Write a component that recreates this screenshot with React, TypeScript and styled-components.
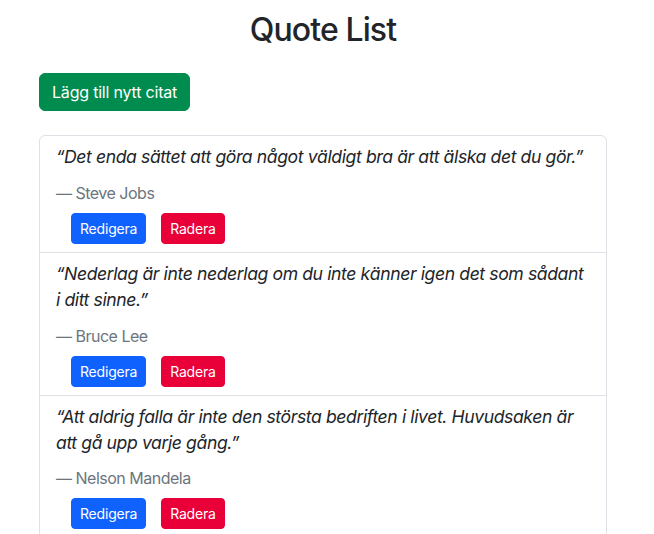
import React from "react";
import styled, { createGlobalStyle } from "styled-components";

const GlobalStyle = createGlobalStyle`
  html, body {
    margin: 0;
    padding: 0;
    background: #ffffff;
  }
  body {
    font-family: Inter, "Noto Sans", "Liberation Sans", sans-serif;
    font-size: 16px;
    line-height: 1.5;
    color: #212529;
    -webkit-font-smoothing: antialiased;
  }
  * { box-sizing: border-box; }
`;

const Page = styled.div`
  width: 568px;
  margin-left: 39px;
  padding-top: 11px;
`;

const Title = styled.h1`
  margin: 0 0 24px;
  font-size: 32px;
  line-height: 1.2;
  font-weight: 500;
  letter-spacing: -0.9px;
  text-align: center;
  color: #212529;
`;

type Variant = "success" | "primary" | "danger";
const colors: Record<Variant, string> = {
  success: "#008c4f",
  primary: "#0f62fe",
  danger: "#ea0039",
};

const Button = styled.button<{ $variant: Variant; $small?: boolean }>`
  display: inline-block;
  border: 1px solid ${(p) => colors[p.$variant]};
  background: ${(p) => colors[p.$variant]};
  color: #fff;
  font-family: inherit;
  font-weight: 400;
  font-size: ${(p) => (p.$small ? "14px" : "16px")};
  line-height: ${(p) => (p.$small ? "21px" : "24px")};
  letter-spacing: -0.2px;
  padding: ${(p) => (p.$small ? "4px 8px" : "6px 12px")};
  border-radius: ${(p) => (p.$small ? "4px" : "6px")};
  cursor: pointer;
`;

const AddRow = styled.div`
  margin-bottom: 24px;
`;

const List = styled.ul`
  list-style: none;
  margin: 0;
  padding: 0;
  border: 1px solid #dee2e6;
  border-radius: 6px;
  overflow: hidden;
`;

const Item = styled.li`
  padding: 8px 16px;
  & + & {
    border-top: 1px solid #dee2e6;
  }
`;

const Quote = styled.p`
  margin: 0 0 10px;
  font-size: 17.6px;
  line-height: 1.5;
  font-style: italic;
  letter-spacing: -0.4px;
  color: #212529;
`;

const Author = styled.div`
  margin: 0 0 8px;
  font-size: 16px;
  line-height: 24px;
  letter-spacing: -0.5px;
  color: #6c757d;
`;

const Actions = styled.div`
  display: flex;
  gap: 15px;
  padding-left: 15px;
`;

const quotes = [
  {
    text: "Det enda sättet att göra något väldigt bra är att älska det du gör.",
    author: "Steve Jobs",
  },
  {
    text: "Nederlag är inte nederlag om du inte känner igen det som sådant i ditt sinne.",
    author: "Bruce Lee",
  },
  {
    text: "Att aldrig falla är inte den största bedriften i livet. Huvudsaken är att gå upp varje gång.",
    author: "Nelson Mandela",
  },
];

export default function App() {
  return (
    <>
      <GlobalStyle />
      <Page>
        <Title>Quote List</Title>
        <AddRow>
          <Button $variant="success">Lägg till nytt citat</Button>
        </AddRow>
        <List>
          {quotes.map((q) => (
            <Item key={q.author}>
              <Quote>“{q.text}”</Quote>
              <Author>— {q.author}</Author>
              <Actions>
                <Button $variant="primary" $small>
                  Redigera
                </Button>
                <Button $variant="danger" $small>
                  Radera
                </Button>
              </Actions>
            </Item>
          ))}
        </List>
      </Page>
    </>
  );
}
